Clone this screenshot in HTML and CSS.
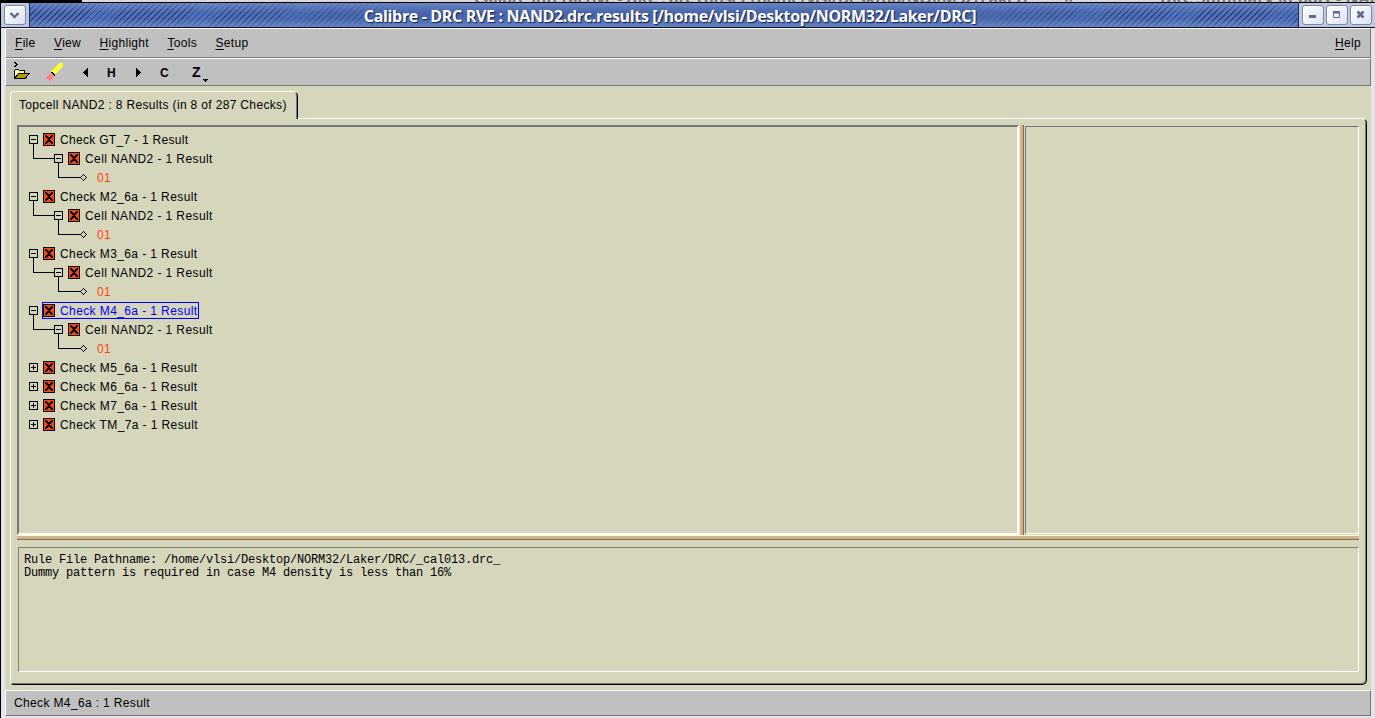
FILE: index.html
```
<!DOCTYPE html>
<html lang="en">
<head>
<meta charset="utf-8">
<title>Calibre - DRC RVE</title>
<link rel="stylesheet" href="styles.css">
</head>
<body>
<div class="behind"><span class="behind-a">Calibre Interactive - DRC : drc runset /home/vlsi/Desktop/NORM32/Laker/</span><span class="behind-x">×</span><span class="behind-b">DRC Summary Report - NAND2</span></div>
<div class="window">
  <header class="titlebar">
    <div class="corner"><button class="wbtn"><svg width="22" height="20" viewBox="0 0 22 20"><path d="M6.500 8l4 4 4-4" fill="none" stroke="#5c6a92" stroke-width="2.400"/></svg></button></div>
    <h1 class="title">Calibre - DRC RVE : NAND2.drc.results [/home/vlsi/Desktop/NORM32/Laker/DRC]</h1>
    <div class="controls">
      <button class="wbtn"><svg width="22" height="20" viewBox="0 0 22 20"><path d="M7 10h7v3H7z" fill="#5c6a92"/></svg></button>
      <button class="wbtn"><svg width="22" height="20" viewBox="0 0 22 20"><path d="M7.500 6.500h6v6h-6z" fill="none" stroke="#5c6a92"/><path d="M7 6h7v2.500H7z" fill="#5c6a92"/></svg></button>
      <button class="wbtn"><svg width="22" height="20" viewBox="0 0 22 20"><path d="M7.500 6.500l6 6M13.500 6.500l-6 6" stroke="#5c6a92" stroke-width="2.600"/></svg></button>
    </div>
  </header>
  <div class="client">
    <nav class="menubar">
      <span><u>F</u>ile</span><span><u>V</u>iew</span><span><u>H</u>ighlight</span><span><u>T</u>ools</span><span><u>S</u>etup</span><span class="help"><u>H</u>elp</span>
    </nav>
    <div class="toolbar">
      <svg width="220" height="26" viewBox="0 59 220 26" shape-rendering="crispEdges">
        <path d="M14 62h2v1h1v1h1v1h-1v1h-1v1h-2v-1h1v-1h1v-1h-1v-1h-1z" fill="#000"/>
        <path d="M14.500 78.500V70.500l1-1h3l1 1h5V74" fill="#ffff9c" stroke="#000"/>
        <path d="M14.500 78.500L18.500 73.500h11L25 78.500z" fill="#a8a000" stroke="#000"/>
        <path d="M59 63h4v3l-8 9h-1l-3-3z" fill="#ffff30"/>
        <path d="M51 72h1l3 3v1h-1l-3-3z" fill="#000"/>
        <path d="M50 73l4 4-4 4h-1l-3-3v-1z" fill="#ff8080"/>
        <path d="M88 68v9h-1v-1h-1v-1h-1v-1h-1v-1h-1v-1h1v-1h1v-1h1v-1h1v-1z" fill="#000"/>
        <path d="M136 68v9h1v-1h1v-1h1v-1h1v-1h1v-1h-1v-1h-1v-1h-1v-1h-1v-1z" fill="#000"/>
        <path d="M203 79h5v1h-1v1h-1v1h-1v-1h-1v-1h-1z" fill="#000"/>
        <text x="107" y="77" class="glyph">H</text>
        <text x="160" y="77" class="glyph">C</text>
        <text x="192" y="77" class="glyph glyph-z">Z</text>
      </svg>
    </div>
    <main class="workspace">
      <div class="tab">Topcell NAND2 : 8 Results (in 8 of 287 Checks)</div>
      <section class="notebook">
        <div class="split">
          <ul class="tree">
            <li class="row tight"><i class="box minus"></i><b class="mark"></b><span>Check GT_7 - 1 Result</span></li>
            <li class="row cell"><i class="box minus"></i><b class="mark"></b><span>Cell NAND2 - 1 Result</span></li>
            <li class="row leaf"><i class="dia"></i><span>01</span></li>
            <li class="row"><i class="box minus"></i><b class="mark"></b><span>Check M2_6a - 1 Result</span></li>
            <li class="row cell"><i class="box minus"></i><b class="mark"></b><span>Cell NAND2 - 1 Result</span></li>
            <li class="row leaf"><i class="dia"></i><span>01</span></li>
            <li class="row"><i class="box minus"></i><b class="mark"></b><span>Check M3_6a - 1 Result</span></li>
            <li class="row cell"><i class="box minus"></i><b class="mark"></b><span>Cell NAND2 - 1 Result</span></li>
            <li class="row leaf"><i class="dia"></i><span>01</span></li>
            <li class="row selected"><i class="box minus"></i><b class="mark"></b><span>Check M4_6a - 1 Result</span></li>
            <li class="row cell"><i class="box minus"></i><b class="mark"></b><span>Cell NAND2 - 1 Result</span></li>
            <li class="row leaf"><i class="dia"></i><span>01</span></li>
            <li class="row"><i class="box plus"></i><b class="mark"></b><span>Check M5_6a - 1 Result</span></li>
            <li class="row"><i class="box plus"></i><b class="mark"></b><span>Check M6_6a - 1 Result</span></li>
            <li class="row"><i class="box plus"></i><b class="mark"></b><span>Check M7_6a - 1 Result</span></li>
            <li class="row"><i class="box plus"></i><b class="mark"></b><span>Check TM_7a - 1 Result</span></li>
          </ul>
          <div class="vsash"></div>
          <div class="side"></div>
        </div>
        <div class="hsash"></div>
        <pre class="info">Rule File Pathname: /home/vlsi/Desktop/NORM32/Laker/DRC/_cal013.drc_
Dummy pattern is required in case M4 density is less than 16%</pre>
      </section>
    </main>
    <footer class="status">Check M4_6a : 1 Result</footer>
  </div>
</div>
<script src="tree.js"></script>
</body>
</html>
```
FILE: tree.js
```
// Draws the check mark box into each tree row.
document.querySelectorAll('.mark').forEach(function (m) {
  m.innerHTML = '<svg width="12" height="13" viewBox="0 0 12 13" shape-rendering="crispEdges"><path fill="#ff4500" stroke="#000" d="M.5.5h11v12H.5z"/><path fill="#000" d="M2 2h2v1h1v1h2V3h1V2h2v2H9v1H8v1H7v1h1v1h1v1h1v2H8v-1H7V9H5v1H4v1H2V9h1V8h1V7h1V6H4V5H3V4H2z"/></svg>';
});
// Draws the small diamond in front of each result.
document.querySelectorAll('.dia').forEach(function (d) {
  d.innerHTML = '<svg width="7" height="7" viewBox="0 0 7 7" shape-rendering="crispEdges"><path fill="#000" d="M3 0h1v1H3zM2 1h1v1H2zM4 1h1v1H4zM1 2h1v1H1zM5 2h1v1H5zM0 3h1v1H0zM6 3h1v1H6zM1 4h1v1H1zM5 4h1v1H5zM2 5h1v1H2zM4 5h1v1H4zM3 6h1v1H3z"/></svg>';
});
```
FILE: styles.css
```
*, *::before, *::after { box-sizing: border-box; }
body { margin: 0; width: 1375px; height: 718px; overflow: hidden; background: #000; font: 12px/19px "Liberation Sans", sans-serif; letter-spacing: .4px; color: #000; display: flex; flex-direction: column; }
.behind { height: 2px; overflow: hidden; margin-left: 82px; background: #d9d9d9; position: relative; font: 700 16px/20px "Open Sans", sans-serif; color: #777; white-space: nowrap; letter-spacing: -.45px; }
.behind span { position: absolute; top: -12px; }
.behind-a { left: 392px; }
.behind-x { left: 982px; }
.behind-b { left: 1078px; letter-spacing: 0; }
.window { margin-top: 1px; height: 715px; border-left: 1px solid #000; background: #e6e4ea; }
.titlebar { height: 25px; display: flex; border-bottom: 1px solid #0a1233; background: #c0c8dc; border-radius: 4px 4px 0 0; overflow: hidden; }
.corner { width: 29px; padding: 2px 0 0 3px; border-right: 1px solid #1c2c60; }
.wbtn { display: block; flex: none; width: 22px; height: 20px; padding: 0; border: 1px solid #7d88a8; border-radius: 3px; background: linear-gradient(135deg, #fff, #dde2f2); box-shadow: inset 1px 1px #fff; }
.wbtn svg { display: block; margin: -1px; }
.title { flex: 1; margin: 0; padding: 0 0 0 12px; text-align: center; white-space: nowrap; color: #fff; font: 700 16px/26px "Open Sans", sans-serif; letter-spacing: -.34px; text-shadow: 1px 1px 1px #14204c; background: linear-gradient(#7c95cda0, transparent 40%, transparent 65%, #7c95cda0), linear-gradient(90deg, transparent 12%, #4866ad 36%, #4866ad 66%, transparent 90%), repeating-linear-gradient(135deg, #2d4583 0 1.200px, #4f70b8 1.200px 4.200px); }
.controls { width: 77px; padding: 2px 0 0 3px; display: flex; gap: 2px; border-left: 1px solid #1c2c60; }
.client { margin: 0 4px; height: 688px; display: flex; flex-direction: column; background: #d6d6bd; }
.menubar, .toolbar, .status { background: #c0c0c0; border: 1px solid #fff; border-right-color: #777; border-bottom-color: #777; }
.menubar { height: 30px; padding: 5px 9px 0; display: flex; letter-spacing: .3px; }
.menubar span { margin-right: 18.500px; }
.menubar .help { margin: 0 0 0 auto; }
u { text-underline-offset: 2px; }
.toolbar { height: 28px; }
.toolbar svg { display: block; margin-left: -6px; }
.glyph { font: bold 12px "Liberation Sans", sans-serif; }
.glyph-z { font-size: 14px; }
.workspace { flex: 1; padding: 5px 4px 0 5px; }
.tab { width: 288px; height: 28px; padding: 4px 0 0 8px; border: 1px solid #fff; border-bottom: 0; border-right-color: #000; box-shadow: inset -1px 0 #777; border-radius: 4px 5px 0 0; background: #d6d6bd; position: relative; letter-spacing: .34px; white-space: nowrap; }
.notebook { height: 567px; margin-top: -1px; padding: 6px 7px 0 6px; border: 1px solid #fff; border-right-color: #000; border-bottom-color: #000; box-shadow: inset -1px -1px #777; border-radius: 0 5px 5px 4px; }
.split { height: 410px; display: flex; }
.tree { width: 1002px; margin: 0; padding: 3px 0 0 10px; list-style: none; border: 2px solid #777; border-right-color: #fff; border-bottom-color: #fff; }
.row { height: 19px; display: flex; align-items: center; white-space: nowrap; position: relative; }
.row span { padding-top: 2px; }
.tight { letter-spacing: .3px; }
.box { width: 9px; height: 9px; margin-right: 5px; border: 1px solid #000; background: linear-gradient(#000, #000) center / 5px 1px no-repeat; }
.plus { background: linear-gradient(#000, #000) center / 5px 1px no-repeat, linear-gradient(#000, #000) center / 1px 5px no-repeat; }
.mark { width: 12px; height: 13px; margin-right: 5px; }
.mark svg, .dia svg { display: block; }
.cell { padding-left: 25px; }
.leaf { padding-left: 51px; color: #ff4500; }
.leaf span { margin-left: 10px; }
.cell::before, .leaf::before { content: ""; position: absolute; left: 4px; top: -5px; width: 21px; height: 15px; border-left: 1px solid #000; border-bottom: 1px solid #000; }
.leaf::before { left: 29px; width: 22px; }
.selected { color: #00f; }
.selected::after { content: ""; position: absolute; left: 13px; top: 1px; width: 157px; height: 17px; border: 1px solid #00f; }
.vsash { width: 5px; background: #d2b48c; border-left: 1px solid #ffe9c4; border-right: 1px solid #806848; }
.side { flex: 1; margin: 1px 0 1px 1px; border: 1px solid #777; border-right-color: #fff; border-bottom-color: #fff; }
.hsash { height: 5px; background: #d2b48c; border-top: 1px solid #ffffc8; border-bottom: 1px solid #806848; }
.info { height: 125px; margin: 7px 0 0 1px; padding: 6px 5px; border: 1px solid #808070; border-right-color: #fff; border-bottom-color: #fff; font: 12px/13px "Liberation Mono", monospace; letter-spacing: -.2px; }
.status { height: 26px; padding: 3px 8px; letter-spacing: .36px; }
```
